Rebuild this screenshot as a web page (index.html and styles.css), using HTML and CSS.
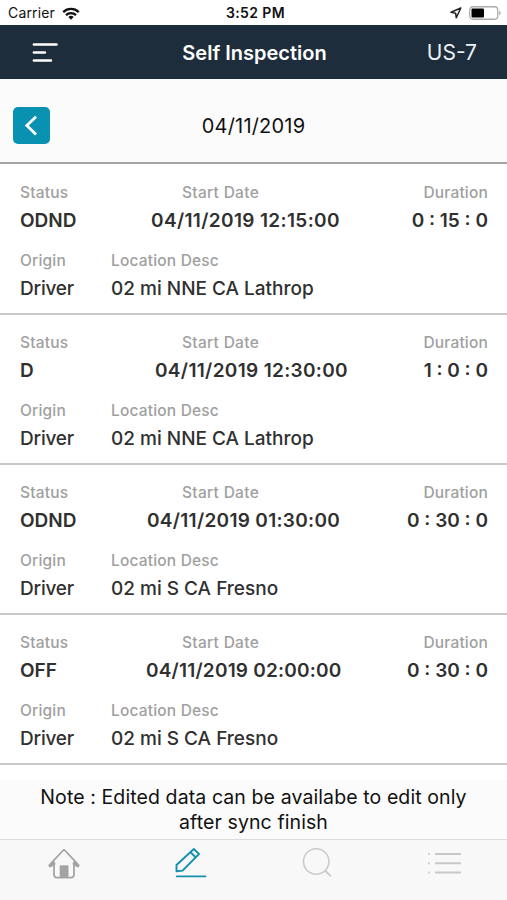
FILE: index.html
```html
<!DOCTYPE html>
<html lang="en">
<head>
<meta charset="utf-8">
<title>Self Inspection</title>
<link rel="stylesheet" href="styles.css">
</head>
<body>
<div class="status-bar">
  <div class="carrier"><span>Carrier</span>
    <svg width="18" height="13" viewBox="0 0 18 13" fill="none" stroke="#111" stroke-width="2.3"><path d="M1.2 5.1a11.2 11.2 0 0 1 15.6 0"/><path d="M4 8.1a7.2 7.2 0 0 1 10 0"/><path d="M9 12.7 6.3 10a3.9 3.9 0 0 1 5.4 0z" fill="#111" stroke="none"/></svg>
  </div>
  <div class="clock">3:52 PM</div>
  <div class="battery">
    <svg width="12" height="12" viewBox="0 0 12 12" fill="none" stroke="#222" stroke-width="1.5" stroke-linejoin="round"><path d="M10.8 1 1 5.2l4.6 1 .7 4.6z"/></svg>
    <svg width="32" height="14" viewBox="0 0 32 14"><rect x=".75" y=".75" width="28" height="12.5" rx="3.2" fill="#fff" stroke="#aaa" stroke-width="1.3"/><rect x="2.5" y="2.5" width="12.5" height="9" rx="1" fill="#000"/><path d="M30.2 4.8q1.5.6 1.5 2.2t-1.5 2.2z" fill="#aaa"/></svg>
  </div>
</div>
<header class="nav-bar">
  <svg class="menu" width="26" height="20" viewBox="0 0 26 20" stroke="#fff" stroke-width="2.4" stroke-linecap="round"><path d="M1.8 1.5h22.8M1.8 9.5h11.2M1.8 17.5H19"/></svg>
  <h1>Self Inspection</h1>
  <span class="unit">US-7</span>
</header>
<section class="date-bar">
  <button class="back" aria-label="Back"><svg width="37" height="37" viewBox="0 0 37 37" fill="none" stroke="#fff" stroke-width="2.8"><path d="m23 9.8-9.2 8.8 9.2 8.8"/></svg></button>
  <span class="date">04/11/2019</span>
</section>
<main>
  <article class="entry">
    <div class="top"><span class="label">Status</span><span class="label start">Start Date</span><span class="label end">Duration</span>
    <b>ODND</b><b class="stamp s1">04/11/2019 12:15:00</b><b class="end">0 : 15 : 0</b></div>
    <div class="bottom"><span class="label">Origin</span><span class="label">Location Desc</span><span class="value driver">Driver</span><span class="value">02 mi NNE CA Lathrop</span></div>
  </article>
  <article class="entry">
    <div class="top"><span class="label">Status</span><span class="label start">Start Date</span><span class="label end">Duration</span>
    <b>D</b><b class="stamp s2">04/11/2019 12:30:00</b><b class="end">1 : 0 : 0</b></div>
    <div class="bottom"><span class="label">Origin</span><span class="label">Location Desc</span><span class="value driver">Driver</span><span class="value">02 mi NNE CA Lathrop</span></div>
  </article>
  <article class="entry">
    <div class="top"><span class="label">Status</span><span class="label start">Start Date</span><span class="label end">Duration</span>
    <b>ODND</b><b class="stamp s3">04/11/2019 01:30:00</b><b class="end">0 : 30 : 0</b></div>
    <div class="bottom"><span class="label">Origin</span><span class="label">Location Desc</span><span class="value driver">Driver</span><span class="value">02 mi S CA Fresno</span></div>
  </article>
  <article class="entry">
    <div class="top"><span class="label">Status</span><span class="label start">Start Date</span><span class="label end">Duration</span>
    <b>OFF</b><b class="stamp s4">04/11/2019 02:00:00</b><b class="end">0 : 30 : 0</b></div>
    <div class="bottom"><span class="label">Origin</span><span class="label">Location Desc</span><span class="value driver">Driver</span><span class="value">02 mi S CA Fresno</span></div>
  </article>
</main>
<p class="note">Note : Edited data can be availabe to edit only<br>after sync finish</p>
<nav class="tabs">
  <span><svg width="34" height="34" viewBox="0 0 34 34" fill="none" stroke="#a3a3a3" stroke-width="1.7" stroke-linejoin="round"><path d="M8 17.5v11q0 3.2 3.2 3.2h13.6q3.2 0 3.2-3.2v-11"/><path d="M18 3.5 8 14.2 3.4 19q-.3 1.5 1.2 1.4L9 17.6M18 3.5l10 10.7 4.6 4.8q.3 1.5-1.2 1.4L27 17.6"/><path d="m7.5 15-3.8 4 1.5 1.2 3.8-2.5zM28.5 15l3.8 4-1.5 1.2-3.8-2.5z" fill="#a3a3a3" stroke-width="1"/><path d="M13.7 31.5V19.3h8.8v12.2z" fill="#a3a3a3" stroke="none"/></svg></span>
  <span><svg width="34" height="34" viewBox="0 0 34 34" fill="none" stroke="#1590ae" stroke-width="1.9" stroke-linejoin="round" stroke-linecap="round"><path d="M3.5 25.3V19L20.8 3l5.2 5L9.6 24.6zM17.5 6.2l5.1 5M3.8 30.4h28.6"/></svg></span>
  <span><svg width="34" height="34" viewBox="0 0 34 34" fill="none" stroke="#cbcbcb" stroke-width="1.6"><circle cx="16.2" cy="15.5" r="12.7"/><path d="m24.8 24.3 6.1 6.1" stroke-width="2"/></svg></span>
  <span><svg width="34" height="34" viewBox="0 0 34 34" fill="none" stroke="#c8c8c8" stroke-width="2"><path d="M8 8h26M8 17.2h26M8 26.4h26M1.2 8h1.6M1.2 17.2h1.6M1.2 26.4h1.6"/></svg></span>
</nav>
</body>
</html>
```

FILE: styles.css
```css
* { box-sizing: border-box; }
body { margin: 0; width: 507px; height: 900px; overflow: hidden; background: #fff; color: #111; font-family: Inter, "Liberation Sans", sans-serif; }
svg { display: block; flex: none; }
.status-bar { display: grid; grid-template-columns: 1fr auto 1fr; height: 25px; align-items: center; padding: 1px 6px 0 8px; font-size: 14px; line-height: 22px; }
.carrier { display: flex; align-items: center; gap: 7px; letter-spacing: .15px; }
.clock { padding-left: 2px; font-weight: 600; letter-spacing: .4px; }
.battery { display: flex; justify-content: flex-end; align-items: center; gap: 7px; }
.nav-bar { display: grid; grid-template-columns: 1fr auto 1fr; align-items: center; height: 54px; padding: 1px 30px 0 32px; background: #1e2d3b; color: #fff; }
h1 { margin: 0; font-size: 20px; line-height: 28px; font-weight: 600; }
.unit { justify-self: end; font-size: 21px; line-height: 28px; color: #eaf0f5; }
.date-bar { display: grid; grid-template-columns: 1fr auto 1fr; align-items: center; height: 85px; padding: 9px 13px 0; background: #fbfbfb; border-bottom: 2px solid #a4a4a4; }
.back { width: 37px; height: 37px; padding: 0; border: 0; border-radius: 5px; background: #0891b0; }
.date { padding-top: 2px; font-size: 20px; line-height: 28px; letter-spacing: .2px; }
.entry { height: 150px; padding: 17px 19px 0 20px; border-bottom: 2px solid #c8c8c8; }
.entry:first-child { height: 151px; padding-top: 18px; }
.top { display: grid; grid-template-columns: 91px 1fr 100px; grid-template-rows: 22px 33px; }
.bottom { display: grid; grid-template-columns: 91px 1fr; grid-template-rows: 22px 33px; margin-top: 13px; }
.label { color: #a0a0a0; font-size: 15.5px; line-height: 22px; font-weight: 500; letter-spacing: .18px; }
.start { padding-left: 71px; letter-spacing: .3px; }
.end { text-align: right; }
b, .value { color: #303030; font-size: 19px; line-height: 33px; font-weight: 600; white-space: nowrap; }
.value { font-weight: 500; }
.driver { letter-spacing: -.2px; }
.s1 { padding-left: 40px; letter-spacing: .36px; }
.s2 { padding-left: 44px; letter-spacing: .33px; }
.s3 { padding-left: 36px; letter-spacing: .3px; }
.s4 { padding-left: 35px; letter-spacing: .2px; }
.note { margin: 15px 0 0; height: 59px; padding-top: 5px; background: #fbfbfb; color: #111; text-align: center; font-size: 19.5px; line-height: 24.5px; letter-spacing: .1px; }
.tabs { display: grid; grid-template-columns: repeat(4, 1fr); height: 62px; padding-top: 6px; border-top: 1px solid #dcdcdc; background: #f8f8f8; }
.tabs span { display: flex; justify-content: center; }
```
